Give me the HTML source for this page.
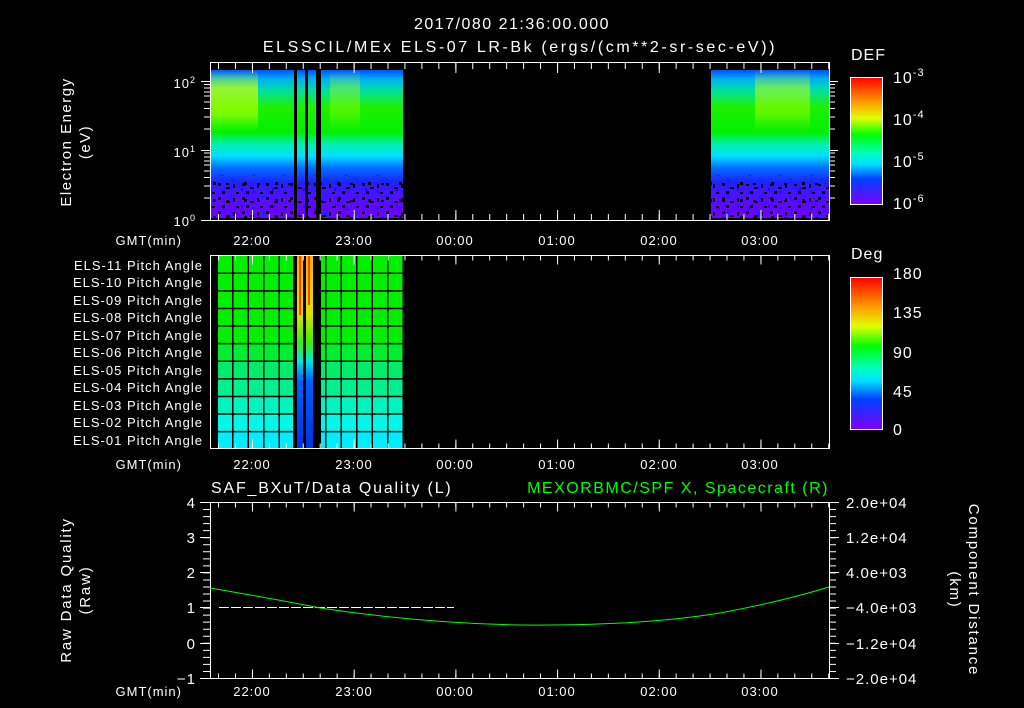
<!DOCTYPE html>
<html><head><meta charset="utf-8"><style>
html,body{margin:0;padding:0;background:#000;width:1024px;height:708px;overflow:hidden}
svg{display:block}
text{font-family:"Liberation Sans",sans-serif;fill:#fff;font-size:13px;letter-spacing:1px}
</style></head><body>
<svg width="1024" height="708" viewBox="0 0 1024 708" xmlns="http://www.w3.org/2000/svg">
<defs>
<linearGradient id="spec" x1="0" y1="0" x2="0" y2="1">
<stop offset="0" stop-color="#0050ff"/>
<stop offset="0.06" stop-color="#00b0f0"/>
<stop offset="0.14" stop-color="#00e0a0"/>
<stop offset="0.25" stop-color="#20f000"/>
<stop offset="0.42" stop-color="#00f000"/>
<stop offset="0.5" stop-color="#00f0b0"/>
<stop offset="0.58" stop-color="#00e0ff"/>
<stop offset="0.66" stop-color="#0070ff"/>
<stop offset="0.76" stop-color="#2020ff"/>
<stop offset="0.85" stop-color="#5010ff"/>
<stop offset="1" stop-color="#7000ff"/>
</linearGradient>
<linearGradient id="yel" x1="0" y1="0" x2="0" y2="1">
<stop offset="0" stop-color="#e0ff00" stop-opacity="0"/>
<stop offset="0.12" stop-color="#d8ff00" stop-opacity="0.7"/>
<stop offset="0.3" stop-color="#a0ff00" stop-opacity="0.7"/>
<stop offset="0.42" stop-color="#80ff00" stop-opacity="0"/>
</linearGradient>
<linearGradient id="cb1" x1="0" y1="0" x2="0" y2="1">
<stop offset="0" stop-color="#ff0000"/><stop offset="0.2" stop-color="#ffa000"/>
<stop offset="0.32" stop-color="#e0ff00"/><stop offset="0.45" stop-color="#00ff00"/>
<stop offset="0.6" stop-color="#00ffc0"/><stop offset="0.68" stop-color="#00e0ff"/>
<stop offset="0.8" stop-color="#0040ff"/><stop offset="1" stop-color="#8000ff"/>
</linearGradient>
<linearGradient id="st1" x1="0" y1="0" x2="0" y2="1">
<stop offset="0" stop-color="#ffb000"/><stop offset="0.3" stop-color="#e0e000"/>
<stop offset="0.45" stop-color="#40f000"/><stop offset="0.55" stop-color="#00e8e0"/>
<stop offset="0.65" stop-color="#0060ff"/><stop offset="1" stop-color="#0030e0"/>
</linearGradient>
<pattern id="speck" width="24" height="14" patternUnits="userSpaceOnUse">
<rect x="2" y="1" width="3" height="3" fill="#000"/><rect x="10" y="5" width="4" height="2" fill="#000"/>
<rect x="17" y="2" width="2" height="4" fill="#000"/><rect x="6" y="9" width="3" height="3" fill="#000"/>
<rect x="20" y="10" width="3" height="2" fill="#000"/>
</pattern>
<pattern id="speck2" width="31" height="17" patternUnits="userSpaceOnUse">
<rect x="4" y="3" width="3" height="3" fill="#3010ff"/><rect x="14" y="8" width="3" height="3" fill="#0030ff"/>
<rect x="24" y="1" width="2" height="3" fill="#3000e0"/><rect x="9" y="13" width="3" height="2" fill="#000"/>
<rect x="27" y="12" width="3" height="3" fill="#000"/>
</pattern>
</defs>

<text x="512" y="29" text-anchor="middle" style="font-size:16px;letter-spacing:1.5px">2017/080 21:36:00.000</text>
<text x="520" y="52" text-anchor="middle" style="font-size:16px;letter-spacing:2.6px">ELSSCIL/MEx ELS-07 LR-Bk  (ergs/(cm**2-sr-sec-eV))</text>

<rect x="210" y="70" width="193" height="148" fill="url(#spec)"/>
<rect x="210" y="70" width="48" height="148" fill="url(#yel)"/>
<rect x="330" y="70" width="30" height="148" fill="url(#yel)" opacity="0.5"/>
<rect x="210" y="175" width="193" height="43" fill="url(#speck2)"/>
<rect x="210" y="182" width="193" height="36" fill="url(#speck)"/>
<rect x="294" y="70" width="3" height="150" fill="#000"/>
<rect x="305" y="70" width="3" height="150" fill="#000"/>
<rect x="316" y="70" width="5" height="150" fill="#000"/>
<rect x="711" y="70" width="118" height="148" fill="url(#spec)"/>
<rect x="755" y="70" width="55" height="148" fill="url(#yel)" opacity="0.7"/>
<rect x="711" y="175" width="118" height="43" fill="url(#speck2)"/>
<rect x="711" y="184" width="118" height="34" fill="url(#speck)"/>

<g stroke="#fff" fill="none">
<rect x="210.5" y="62.5" width="619" height="158"/>
<line x1="201" y1="220.5" x2="210" y2="220.5"/>
<line x1="201" y1="81.5" x2="210" y2="81.5"/><line x1="201" y1="150.5" x2="210" y2="150.5"/>
<path d="M204 84.5h6M204 88h6M204 92h6M204 96h6M204 102h6M204 108.5h6M204 117h6M204 129h6M204 153h6M204 157h6M204 161h6M204 165h6M204 171h6M204 177.5h6M204 186h6M204 198h6"/>
<path d="M829 84.5h6M829 88h6M829 92h6M829 96h6M829 102h6M829 108.5h6M829 117h6M829 129h6M829 150.5h9M829 153h6M829 157h6M829 161h6M829 165h6M829 171h6M829 177.5h6M829 186h6M829 198h6M829 81.5h9"/>
<line x1="218" y1="66" x2="829" y2="66" stroke-width="6" stroke-dasharray="1 15.95"/>
<line x1="218" y1="217" x2="829" y2="217" stroke-width="6" stroke-dasharray="1 15.95"/>
<line x1="252" y1="68" x2="829" y2="68" stroke-width="10" stroke-dasharray="1 100.7"/>
<line x1="252" y1="215" x2="829" y2="215" stroke-width="10" stroke-dasharray="1 100.7"/>
</g>
<text x="196" y="88" text-anchor="end">10<tspan dy="-5" style="font-size:9px">2</tspan></text>
<text x="196" y="157" text-anchor="end">10<tspan dy="-5" style="font-size:9px">1</tspan></text>
<text x="196" y="226" text-anchor="end">10<tspan dy="-5" style="font-size:9px">0</tspan></text>
<text transform="translate(71,142) rotate(-90)" text-anchor="middle" style="font-size:15px;letter-spacing:1.5px">Electron Energy</text>
<text transform="translate(90,142) rotate(-90)" text-anchor="middle" style="font-size:15px;letter-spacing:1.5px">(eV)</text>
<g text-anchor="middle">
<text x="182" y="245" text-anchor="end">GMT(min)</text>
<text x="252" y="245">22:00</text><text x="354" y="245">23:00</text><text x="455" y="245">00:00</text>
<text x="557" y="245">01:00</text><text x="659" y="245">02:00</text><text x="760" y="245">03:00</text>
</g>
<text x="851" y="60" style="font-size:16px">DEF</text>
<rect x="850.5" y="77.5" width="32" height="127" fill="url(#cb1)" stroke="#fff"/>
<text x="893" y="83" style="font-size:16px">10<tspan dy="-7" style="font-size:11px">-3</tspan></text>
<text x="893" y="125" style="font-size:16px">10<tspan dy="-7" style="font-size:11px">-4</tspan></text>
<text x="893" y="167" style="font-size:16px">10<tspan dy="-7" style="font-size:11px">-5</tspan></text>
<text x="893" y="209" style="font-size:16px">10<tspan dy="-7" style="font-size:11px">-6</tspan></text>

<rect x="218" y="255" width="185" height="103" fill="#00f000"/>
<rect x="218" y="343" width="185" height="18" fill="#00ee30"/>
<rect x="218" y="361" width="185" height="18" fill="#00ec6a"/>
<rect x="218" y="378" width="185" height="18" fill="#00f090"/>
<rect x="218" y="396" width="185" height="18" fill="#00f4c0"/>
<rect x="218" y="413" width="185" height="18" fill="#00f8e8"/>
<rect x="218" y="431" width="185" height="17" fill="#00ecff"/>
<g stroke="#000">
<line x1="232" y1="351.5" x2="403" y2="351.5" stroke-width="193" stroke-dasharray="1.5 14"/>
<line x1="310.5" y1="272.5" x2="310.5" y2="448" stroke-width="185" stroke-dasharray="1.5 16.1"/>
</g>
<rect x="293" y="255" width="4" height="193" fill="#000"/>
<rect x="297" y="255" width="6" height="193" fill="url(#st1)"/>
<rect x="299" y="255" width="2" height="60" fill="#ff4000"/>
<rect x="303" y="255" width="3" height="193" fill="#000"/>
<rect x="306" y="255" width="7" height="193" fill="url(#st1)"/>
<rect x="308" y="255" width="2" height="50" fill="#ff4000"/>
<rect x="313" y="255" width="8" height="193" fill="#000"/>
<g stroke="#fff" fill="none">
<rect x="210.5" y="255.5" width="619" height="193"/>
<line x1="218" y1="258" x2="829" y2="258" stroke-width="5" stroke-dasharray="1 15.95"/>
<line x1="218" y1="446" x2="829" y2="446" stroke-width="5" stroke-dasharray="1 15.95"/>
<line x1="252" y1="260" x2="829" y2="260" stroke-width="9" stroke-dasharray="1 100.7"/>
<line x1="252" y1="444" x2="829" y2="444" stroke-width="9" stroke-dasharray="1 100.7"/>
</g>
<g text-anchor="end">
<text x="203" y="270">ELS-11 Pitch Angle</text><text x="203" y="287">ELS-10 Pitch Angle</text>
<text x="203" y="305">ELS-09 Pitch Angle</text><text x="203" y="322">ELS-08 Pitch Angle</text>
<text x="203" y="340">ELS-07 Pitch Angle</text><text x="203" y="357">ELS-06 Pitch Angle</text>
<text x="203" y="375">ELS-05 Pitch Angle</text><text x="203" y="392">ELS-04 Pitch Angle</text>
<text x="203" y="410">ELS-03 Pitch Angle</text><text x="203" y="427">ELS-02 Pitch Angle</text>
<text x="203" y="445">ELS-01 Pitch Angle</text>
</g>
<g text-anchor="middle">
<text x="182" y="469" text-anchor="end">GMT(min)</text>
<text x="252" y="469">22:00</text><text x="354" y="469">23:00</text><text x="455" y="469">00:00</text>
<text x="557" y="469">01:00</text><text x="659" y="469">02:00</text><text x="760" y="469">03:00</text>
</g>
<text x="851" y="259" style="font-size:16px">Deg</text>
<rect x="850.5" y="277.5" width="32" height="152" fill="url(#cb1)" stroke="#fff"/>
<text x="893" y="279" style="font-size:16px">180</text><text x="893" y="318" style="font-size:16px">135</text><text x="893" y="358" style="font-size:16px">90</text>
<text x="893" y="397" style="font-size:16px">45</text><text x="893" y="435" style="font-size:16px">0</text>

<text x="211" y="493" style="font-size:16px;letter-spacing:1.8px">SAF_BXuT/Data Quality (L)</text>
<text x="829" y="493" text-anchor="end" style="font-size:16px;letter-spacing:1.5px;fill:#00ff00">MEXORBMC/SPF X, Spacecraft (R)</text>
<g stroke="#fff" fill="none">
<rect x="210.5" y="502.5" width="619" height="176"/>
<line x1="206.5" y1="502" x2="206.5" y2="679" stroke-width="7" stroke-dasharray="1 6.04"/>
<line x1="832.5" y1="502" x2="832.5" y2="679" stroke-width="7" stroke-dasharray="1 6.04"/>
<path d="M200 502.5h10M200 537.5h10M200 572.5h10M200 607.5h10M200 643.5h10M200 678.5h10M829 502.5h10M829 537.5h10M829 572.5h10M829 607.5h10M829 643.5h10M829 678.5h10"/>
<line x1="218" y1="505" x2="829" y2="505" stroke-width="5" stroke-dasharray="1 15.95"/>
<line x1="218" y1="676" x2="829" y2="676" stroke-width="5" stroke-dasharray="1 15.95"/>
<line x1="252" y1="507" x2="829" y2="507" stroke-width="9" stroke-dasharray="1 100.7"/>
<line x1="252" y1="674" x2="829" y2="674" stroke-width="9" stroke-dasharray="1 100.7"/>
</g>
<line x1="219" y1="607.5" x2="454" y2="607.5" stroke="#fff" stroke-dasharray="10,2"/>
<path d="M210 588 Q 280 600 320 608 Q 420 623 520 625 Q 640 626 720 613 Q 780 602 829 587" stroke="#00ff00" fill="none"/>
<g text-anchor="end">
<text x="196" y="508" style="font-size:15px">4</text><text x="196" y="543" style="font-size:15px">3</text><text x="196" y="578" style="font-size:15px">2</text>
<text x="196" y="613" style="font-size:15px">1</text><text x="196" y="649" style="font-size:15px">0</text><text x="196" y="684" style="font-size:15px">−1</text>
</g>
<text x="846" y="508" style="font-size:15px">2.0e+04</text><text x="846" y="543" style="font-size:15px">1.2e+04</text><text x="846" y="578" style="font-size:15px">4.0e+03</text>
<text x="846" y="613" style="font-size:15px">−4.0e+03</text><text x="846" y="649" style="font-size:15px">−1.2e+04</text><text x="846" y="684" style="font-size:15px">−2.0e+04</text>
<text transform="translate(71,590) rotate(-90)" text-anchor="middle" style="font-size:15px;letter-spacing:1.8px">Raw Data Quality</text>
<text transform="translate(90,590) rotate(-90)" text-anchor="middle" style="font-size:15px;letter-spacing:1.8px">(Raw)</text>
<text transform="translate(969,590) rotate(90)" text-anchor="middle" style="font-size:15px;letter-spacing:1.8px">Component Distance</text>
<text transform="translate(950,590) rotate(90)" text-anchor="middle" style="font-size:15px;letter-spacing:1.8px">(km)</text>
<g text-anchor="middle">
<text x="182" y="696" text-anchor="end">GMT(min)</text>
<text x="252" y="696">22:00</text><text x="354" y="696">23:00</text><text x="455" y="696">00:00</text>
<text x="557" y="696">01:00</text><text x="659" y="696">02:00</text><text x="760" y="696">03:00</text>
</g>
</svg>
</body></html>
